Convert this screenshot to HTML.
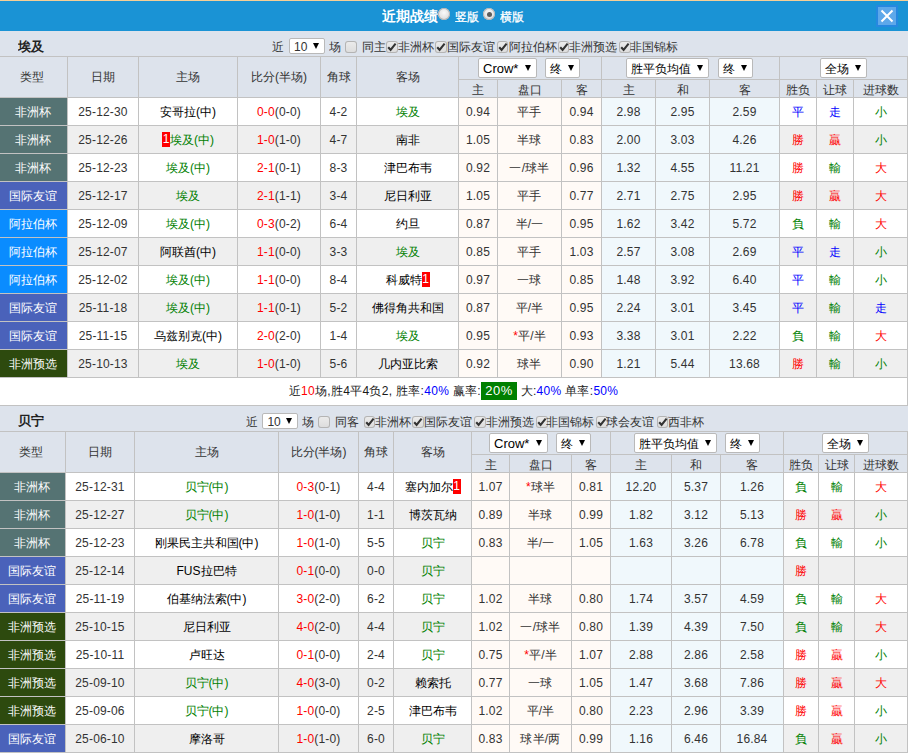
<!DOCTYPE html>
<html><head><meta charset="utf-8"><style>
html,body{margin:0;padding:0;}
body{width:908px;height:753px;overflow:hidden;position:relative;background:#fff;font-family:"Liberation Sans",sans-serif;font-size:12px;color:#333;}
body div{position:absolute;overflow:hidden;}
.n{letter-spacing:0.18px}
.bd{display:inline-block;background:#f00;color:#fff;width:8px;text-align:center;line-height:15px;vertical-align:1px;font-size:12px;}
.tri{position:absolute;width:0;height:0;border-left:3.5px solid transparent;border-right:3.5px solid transparent;border-top:6px solid #000;}
</style></head><body>
<div style="left:0px;top:0px;width:908px;height:1px;background:#f6cf96"></div>
<div style="left:0px;top:1px;width:908px;height:30px;background:#1a93d5"></div>
<div style="left:382px;top:8px;width:60px;height:16px;color:#fff;font-weight:bold;font-size:14px;line-height:16px">近期战绩</div>
<div style="left:438px;top:8px;width:12px;height:12px;border-radius:50%;background:radial-gradient(circle at 50% 40%,#fafafa,#d0d0d0);box-shadow:inset 0 0 0 1px #b4b4b4"></div>
<div style="left:455px;top:10px;width:30px;height:14px;color:#fff;font-size:12px;line-height:14px;-webkit-text-stroke:0.3px #fff">竖版</div>
<div style="left:483px;top:8px;width:12px;height:12px;border-radius:50%;background:radial-gradient(circle at 50% 40%,#fafafa,#d0d0d0);box-shadow:inset 0 0 0 1px #b4b4b4"><div style="left:3.5px;top:3.5px;width:5px;height:5px;border-radius:50%;background:#5c5c5c"></div></div>
<div style="left:500px;top:10px;width:30px;height:14px;color:#fff;font-size:12px;line-height:14px;-webkit-text-stroke:0.3px #fff">横版</div>
<div style="left:876px;top:5px;width:22px;height:22px;background:#5ea8ea;border:2px solid #2688e0;box-sizing:border-box"><svg width="18" height="18" viewBox="0 0 18 18" style="position:absolute;left:0;top:0"><path d="M3.5 3.5 L14.5 14.5 M14.5 3.5 L3.5 14.5" stroke="#fff" stroke-width="2"/></svg></div>
<div style="left:0px;top:56px;width:908px;height:322px;background:#c2c2c2"></div>
<div style="left:0px;top:31px;width:908px;height:25px;background:#dde3ec"></div>
<div style="left:18px;top:39px;width:40px;height:15px;font-weight:bold;font-size:13px;line-height:15px;color:#222">埃及</div>
<div style="left:0px;top:57px;width:67px;height:40px;background:#dde3ec;line-height:40px;text-align:center;font-size:12px;color:#333;padding-right:3px;box-sizing:border-box">类型</div>
<div style="left:68px;top:57px;width:70px;height:40px;background:#dde3ec;line-height:40px;text-align:center;font-size:12px;color:#333">日期</div>
<div style="left:139px;top:57px;width:98px;height:40px;background:#dde3ec;line-height:40px;text-align:center;font-size:12px;color:#333">主场</div>
<div style="left:238px;top:57px;width:82px;height:40px;background:#dde3ec;line-height:40px;text-align:center;font-size:12px;color:#333">比分(半场)</div>
<div style="left:321px;top:57px;width:35px;height:40px;background:#dde3ec;line-height:40px;text-align:center;font-size:12px;color:#333">角球</div>
<div style="left:357px;top:57px;width:101px;height:40px;background:#dde3ec;line-height:40px;text-align:center;font-size:12px;color:#333">客场</div>
<div style="left:459px;top:57px;width:142px;height:22px;background:#dde3ec;line-height:22px;text-align:center;"></div>
<div style="left:602px;top:57px;width:177px;height:22px;background:#dde3ec;line-height:22px;text-align:center;"></div>
<div style="left:780px;top:57px;width:127px;height:22px;background:#dde3ec;line-height:22px;text-align:center;"></div>
<div style="left:459px;top:80px;width:38px;height:17px;background:#dde3ec;line-height:17px;text-align:center;font-size:12px;color:#333"><span style="position:relative;top:2px">主</span></div>
<div style="left:498px;top:80px;width:63px;height:17px;background:#dde3ec;line-height:17px;text-align:center;font-size:12px;color:#333"><span style="position:relative;top:2px">盘口</span></div>
<div style="left:562px;top:80px;width:39px;height:17px;background:#dde3ec;line-height:17px;text-align:center;font-size:12px;color:#333"><span style="position:relative;top:2px">客</span></div>
<div style="left:602px;top:80px;width:53px;height:17px;background:#dde3ec;line-height:17px;text-align:center;font-size:12px;color:#333"><span style="position:relative;top:2px">主</span></div>
<div style="left:656px;top:80px;width:53px;height:17px;background:#dde3ec;line-height:17px;text-align:center;font-size:12px;color:#333"><span style="position:relative;top:2px">和</span></div>
<div style="left:710px;top:80px;width:69px;height:17px;background:#dde3ec;line-height:17px;text-align:center;font-size:12px;color:#333"><span style="position:relative;top:2px">客</span></div>
<div style="left:780px;top:80px;width:36px;height:17px;background:#dde3ec;line-height:17px;text-align:center;font-size:12px;color:#333"><span style="position:relative;top:2px">胜负</span></div>
<div style="left:817px;top:80px;width:36px;height:17px;background:#dde3ec;line-height:17px;text-align:center;font-size:12px;color:#333"><span style="position:relative;top:2px">让球</span></div>
<div style="left:854px;top:80px;width:53px;height:17px;background:#dde3ec;line-height:17px;text-align:center;font-size:12px;color:#333"><span style="position:relative;top:2px">进球数</span></div>
<div style="left:0px;top:98px;width:67px;height:27px;background:#557373;line-height:29px;text-align:center;color:#fff;font-size:12px;padding-right:2px;box-sizing:border-box">非洲杯</div>
<div style="left:68px;top:98px;width:70px;height:27px;background:#ffffff;line-height:29px;text-align:center;color:#333333;letter-spacing:0.18px">25-12-30</div>
<div style="left:139px;top:98px;width:98px;height:27px;background:#ffffff;line-height:29px;text-align:center;"><span style="color:#000">安哥拉(中)</span></div>
<div style="left:238px;top:98px;width:82px;height:27px;background:#ffffff;line-height:29px;text-align:center;letter-spacing:0.18px"><span style="color:#ff0000">0-0</span><span style="color:#333333">(0-0)</span></div>
<div style="left:321px;top:98px;width:35px;height:27px;background:#ffffff;line-height:29px;text-align:center;color:#333333;letter-spacing:0.18px">4-2</div>
<div style="left:357px;top:98px;width:101px;height:27px;background:#ffffff;line-height:29px;text-align:center;"><span style="color:#008000">埃及</span></div>
<div style="left:459px;top:98px;width:38px;height:27px;background:#fffaf6;line-height:29px;text-align:center;color:#333333;letter-spacing:0.18px">0.94</div>
<div style="left:498px;top:98px;width:63px;height:27px;background:#fffaf6;line-height:29px;text-align:center;color:#333333;letter-spacing:0.18px">平手</div>
<div style="left:562px;top:98px;width:39px;height:27px;background:#fffaf6;line-height:29px;text-align:center;color:#333333;letter-spacing:0.18px">0.94</div>
<div style="left:602px;top:98px;width:53px;height:27px;background:#f0f8fc;line-height:29px;text-align:center;color:#333333;letter-spacing:0.18px">2.98</div>
<div style="left:656px;top:98px;width:53px;height:27px;background:#f0f8fc;line-height:29px;text-align:center;color:#333333;letter-spacing:0.18px">2.95</div>
<div style="left:710px;top:98px;width:69px;height:27px;background:#f0f8fc;line-height:29px;text-align:center;color:#333333;letter-spacing:0.18px">2.59</div>
<div style="left:780px;top:98px;width:36px;height:27px;background:#ffffff;line-height:29px;text-align:center;color:#0000ff">平</div>
<div style="left:817px;top:98px;width:36px;height:27px;background:#ffffff;line-height:29px;text-align:center;color:#0000ff">走</div>
<div style="left:854px;top:98px;width:53px;height:27px;background:#ffffff;line-height:29px;text-align:center;color:#008000">小</div>
<div style="left:0px;top:126px;width:67px;height:27px;background:#557373;line-height:29px;text-align:center;color:#fff;font-size:12px;padding-right:2px;box-sizing:border-box">非洲杯</div>
<div style="left:68px;top:126px;width:70px;height:27px;background:#efefef;line-height:29px;text-align:center;color:#333333;letter-spacing:0.18px">25-12-26</div>
<div style="left:139px;top:126px;width:98px;height:27px;background:#efefef;line-height:29px;text-align:center;"><span class="bd">1</span><span style="color:#008000">埃及(中)</span></div>
<div style="left:238px;top:126px;width:82px;height:27px;background:#efefef;line-height:29px;text-align:center;letter-spacing:0.18px"><span style="color:#ff0000">1-0</span><span style="color:#333333">(1-0)</span></div>
<div style="left:321px;top:126px;width:35px;height:27px;background:#efefef;line-height:29px;text-align:center;color:#333333;letter-spacing:0.18px">4-7</div>
<div style="left:357px;top:126px;width:101px;height:27px;background:#efefef;line-height:29px;text-align:center;"><span style="color:#000">南非</span></div>
<div style="left:459px;top:126px;width:38px;height:27px;background:#fffaf6;line-height:29px;text-align:center;color:#333333;letter-spacing:0.18px">1.05</div>
<div style="left:498px;top:126px;width:63px;height:27px;background:#fffaf6;line-height:29px;text-align:center;color:#333333;letter-spacing:0.18px">半球</div>
<div style="left:562px;top:126px;width:39px;height:27px;background:#fffaf6;line-height:29px;text-align:center;color:#333333;letter-spacing:0.18px">0.83</div>
<div style="left:602px;top:126px;width:53px;height:27px;background:#f0f8fc;line-height:29px;text-align:center;color:#333333;letter-spacing:0.18px">2.00</div>
<div style="left:656px;top:126px;width:53px;height:27px;background:#f0f8fc;line-height:29px;text-align:center;color:#333333;letter-spacing:0.18px">3.03</div>
<div style="left:710px;top:126px;width:69px;height:27px;background:#f0f8fc;line-height:29px;text-align:center;color:#333333;letter-spacing:0.18px">4.26</div>
<div style="left:780px;top:126px;width:36px;height:27px;background:#efefef;line-height:29px;text-align:center;color:#ff0000">勝</div>
<div style="left:817px;top:126px;width:36px;height:27px;background:#efefef;line-height:29px;text-align:center;color:#ff0000">贏</div>
<div style="left:854px;top:126px;width:53px;height:27px;background:#efefef;line-height:29px;text-align:center;color:#008000">小</div>
<div style="left:0px;top:154px;width:67px;height:27px;background:#557373;line-height:29px;text-align:center;color:#fff;font-size:12px;padding-right:2px;box-sizing:border-box">非洲杯</div>
<div style="left:68px;top:154px;width:70px;height:27px;background:#ffffff;line-height:29px;text-align:center;color:#333333;letter-spacing:0.18px">25-12-23</div>
<div style="left:139px;top:154px;width:98px;height:27px;background:#ffffff;line-height:29px;text-align:center;"><span style="color:#008000">埃及(中)</span></div>
<div style="left:238px;top:154px;width:82px;height:27px;background:#ffffff;line-height:29px;text-align:center;letter-spacing:0.18px"><span style="color:#ff0000">2-1</span><span style="color:#333333">(0-1)</span></div>
<div style="left:321px;top:154px;width:35px;height:27px;background:#ffffff;line-height:29px;text-align:center;color:#333333;letter-spacing:0.18px">8-3</div>
<div style="left:357px;top:154px;width:101px;height:27px;background:#ffffff;line-height:29px;text-align:center;"><span style="color:#000">津巴布韦</span></div>
<div style="left:459px;top:154px;width:38px;height:27px;background:#fffaf6;line-height:29px;text-align:center;color:#333333;letter-spacing:0.18px">0.92</div>
<div style="left:498px;top:154px;width:63px;height:27px;background:#fffaf6;line-height:29px;text-align:center;color:#333333;letter-spacing:0.18px">一/球半</div>
<div style="left:562px;top:154px;width:39px;height:27px;background:#fffaf6;line-height:29px;text-align:center;color:#333333;letter-spacing:0.18px">0.96</div>
<div style="left:602px;top:154px;width:53px;height:27px;background:#f0f8fc;line-height:29px;text-align:center;color:#333333;letter-spacing:0.18px">1.32</div>
<div style="left:656px;top:154px;width:53px;height:27px;background:#f0f8fc;line-height:29px;text-align:center;color:#333333;letter-spacing:0.18px">4.55</div>
<div style="left:710px;top:154px;width:69px;height:27px;background:#f0f8fc;line-height:29px;text-align:center;color:#333333;letter-spacing:0.18px">11.21</div>
<div style="left:780px;top:154px;width:36px;height:27px;background:#ffffff;line-height:29px;text-align:center;color:#ff0000">勝</div>
<div style="left:817px;top:154px;width:36px;height:27px;background:#ffffff;line-height:29px;text-align:center;color:#008000">輸</div>
<div style="left:854px;top:154px;width:53px;height:27px;background:#ffffff;line-height:29px;text-align:center;color:#ff0000">大</div>
<div style="left:0px;top:182px;width:67px;height:27px;background:#4a62ba;line-height:29px;text-align:center;color:#fff;font-size:12px;padding-right:2px;box-sizing:border-box">国际友谊</div>
<div style="left:68px;top:182px;width:70px;height:27px;background:#efefef;line-height:29px;text-align:center;color:#333333;letter-spacing:0.18px">25-12-17</div>
<div style="left:139px;top:182px;width:98px;height:27px;background:#efefef;line-height:29px;text-align:center;"><span style="color:#008000">埃及</span></div>
<div style="left:238px;top:182px;width:82px;height:27px;background:#efefef;line-height:29px;text-align:center;letter-spacing:0.18px"><span style="color:#ff0000">2-1</span><span style="color:#333333">(1-1)</span></div>
<div style="left:321px;top:182px;width:35px;height:27px;background:#efefef;line-height:29px;text-align:center;color:#333333;letter-spacing:0.18px">3-4</div>
<div style="left:357px;top:182px;width:101px;height:27px;background:#efefef;line-height:29px;text-align:center;"><span style="color:#000">尼日利亚</span></div>
<div style="left:459px;top:182px;width:38px;height:27px;background:#fffaf6;line-height:29px;text-align:center;color:#333333;letter-spacing:0.18px">1.05</div>
<div style="left:498px;top:182px;width:63px;height:27px;background:#fffaf6;line-height:29px;text-align:center;color:#333333;letter-spacing:0.18px">平手</div>
<div style="left:562px;top:182px;width:39px;height:27px;background:#fffaf6;line-height:29px;text-align:center;color:#333333;letter-spacing:0.18px">0.77</div>
<div style="left:602px;top:182px;width:53px;height:27px;background:#f0f8fc;line-height:29px;text-align:center;color:#333333;letter-spacing:0.18px">2.71</div>
<div style="left:656px;top:182px;width:53px;height:27px;background:#f0f8fc;line-height:29px;text-align:center;color:#333333;letter-spacing:0.18px">2.75</div>
<div style="left:710px;top:182px;width:69px;height:27px;background:#f0f8fc;line-height:29px;text-align:center;color:#333333;letter-spacing:0.18px">2.95</div>
<div style="left:780px;top:182px;width:36px;height:27px;background:#efefef;line-height:29px;text-align:center;color:#ff0000">勝</div>
<div style="left:817px;top:182px;width:36px;height:27px;background:#efefef;line-height:29px;text-align:center;color:#ff0000">贏</div>
<div style="left:854px;top:182px;width:53px;height:27px;background:#efefef;line-height:29px;text-align:center;color:#ff0000">大</div>
<div style="left:0px;top:210px;width:67px;height:27px;background:#0a8cff;line-height:29px;text-align:center;color:#fff;font-size:12px;padding-right:2px;box-sizing:border-box">阿拉伯杯</div>
<div style="left:68px;top:210px;width:70px;height:27px;background:#ffffff;line-height:29px;text-align:center;color:#333333;letter-spacing:0.18px">25-12-09</div>
<div style="left:139px;top:210px;width:98px;height:27px;background:#ffffff;line-height:29px;text-align:center;"><span style="color:#008000">埃及(中)</span></div>
<div style="left:238px;top:210px;width:82px;height:27px;background:#ffffff;line-height:29px;text-align:center;letter-spacing:0.18px"><span style="color:#ff0000">0-3</span><span style="color:#333333">(0-2)</span></div>
<div style="left:321px;top:210px;width:35px;height:27px;background:#ffffff;line-height:29px;text-align:center;color:#333333;letter-spacing:0.18px">6-4</div>
<div style="left:357px;top:210px;width:101px;height:27px;background:#ffffff;line-height:29px;text-align:center;"><span style="color:#000">约旦</span></div>
<div style="left:459px;top:210px;width:38px;height:27px;background:#fffaf6;line-height:29px;text-align:center;color:#333333;letter-spacing:0.18px">0.87</div>
<div style="left:498px;top:210px;width:63px;height:27px;background:#fffaf6;line-height:29px;text-align:center;color:#333333;letter-spacing:0.18px">半/一</div>
<div style="left:562px;top:210px;width:39px;height:27px;background:#fffaf6;line-height:29px;text-align:center;color:#333333;letter-spacing:0.18px">0.95</div>
<div style="left:602px;top:210px;width:53px;height:27px;background:#f0f8fc;line-height:29px;text-align:center;color:#333333;letter-spacing:0.18px">1.62</div>
<div style="left:656px;top:210px;width:53px;height:27px;background:#f0f8fc;line-height:29px;text-align:center;color:#333333;letter-spacing:0.18px">3.42</div>
<div style="left:710px;top:210px;width:69px;height:27px;background:#f0f8fc;line-height:29px;text-align:center;color:#333333;letter-spacing:0.18px">5.72</div>
<div style="left:780px;top:210px;width:36px;height:27px;background:#ffffff;line-height:29px;text-align:center;color:#008000">負</div>
<div style="left:817px;top:210px;width:36px;height:27px;background:#ffffff;line-height:29px;text-align:center;color:#008000">輸</div>
<div style="left:854px;top:210px;width:53px;height:27px;background:#ffffff;line-height:29px;text-align:center;color:#ff0000">大</div>
<div style="left:0px;top:238px;width:67px;height:27px;background:#0a8cff;line-height:29px;text-align:center;color:#fff;font-size:12px;padding-right:2px;box-sizing:border-box">阿拉伯杯</div>
<div style="left:68px;top:238px;width:70px;height:27px;background:#efefef;line-height:29px;text-align:center;color:#333333;letter-spacing:0.18px">25-12-07</div>
<div style="left:139px;top:238px;width:98px;height:27px;background:#efefef;line-height:29px;text-align:center;"><span style="color:#000">阿联酋(中)</span></div>
<div style="left:238px;top:238px;width:82px;height:27px;background:#efefef;line-height:29px;text-align:center;letter-spacing:0.18px"><span style="color:#ff0000">1-1</span><span style="color:#333333">(0-0)</span></div>
<div style="left:321px;top:238px;width:35px;height:27px;background:#efefef;line-height:29px;text-align:center;color:#333333;letter-spacing:0.18px">3-3</div>
<div style="left:357px;top:238px;width:101px;height:27px;background:#efefef;line-height:29px;text-align:center;"><span style="color:#008000">埃及</span></div>
<div style="left:459px;top:238px;width:38px;height:27px;background:#fffaf6;line-height:29px;text-align:center;color:#333333;letter-spacing:0.18px">0.85</div>
<div style="left:498px;top:238px;width:63px;height:27px;background:#fffaf6;line-height:29px;text-align:center;color:#333333;letter-spacing:0.18px">平手</div>
<div style="left:562px;top:238px;width:39px;height:27px;background:#fffaf6;line-height:29px;text-align:center;color:#333333;letter-spacing:0.18px">1.03</div>
<div style="left:602px;top:238px;width:53px;height:27px;background:#f0f8fc;line-height:29px;text-align:center;color:#333333;letter-spacing:0.18px">2.57</div>
<div style="left:656px;top:238px;width:53px;height:27px;background:#f0f8fc;line-height:29px;text-align:center;color:#333333;letter-spacing:0.18px">3.08</div>
<div style="left:710px;top:238px;width:69px;height:27px;background:#f0f8fc;line-height:29px;text-align:center;color:#333333;letter-spacing:0.18px">2.69</div>
<div style="left:780px;top:238px;width:36px;height:27px;background:#efefef;line-height:29px;text-align:center;color:#0000ff">平</div>
<div style="left:817px;top:238px;width:36px;height:27px;background:#efefef;line-height:29px;text-align:center;color:#0000ff">走</div>
<div style="left:854px;top:238px;width:53px;height:27px;background:#efefef;line-height:29px;text-align:center;color:#008000">小</div>
<div style="left:0px;top:266px;width:67px;height:27px;background:#0a8cff;line-height:29px;text-align:center;color:#fff;font-size:12px;padding-right:2px;box-sizing:border-box">阿拉伯杯</div>
<div style="left:68px;top:266px;width:70px;height:27px;background:#ffffff;line-height:29px;text-align:center;color:#333333;letter-spacing:0.18px">25-12-02</div>
<div style="left:139px;top:266px;width:98px;height:27px;background:#ffffff;line-height:29px;text-align:center;"><span style="color:#008000">埃及(中)</span></div>
<div style="left:238px;top:266px;width:82px;height:27px;background:#ffffff;line-height:29px;text-align:center;letter-spacing:0.18px"><span style="color:#ff0000">1-1</span><span style="color:#333333">(0-0)</span></div>
<div style="left:321px;top:266px;width:35px;height:27px;background:#ffffff;line-height:29px;text-align:center;color:#333333;letter-spacing:0.18px">8-4</div>
<div style="left:357px;top:266px;width:101px;height:27px;background:#ffffff;line-height:29px;text-align:center;"><span style="color:#000">科威特</span><span class="bd">1</span></div>
<div style="left:459px;top:266px;width:38px;height:27px;background:#fffaf6;line-height:29px;text-align:center;color:#333333;letter-spacing:0.18px">0.97</div>
<div style="left:498px;top:266px;width:63px;height:27px;background:#fffaf6;line-height:29px;text-align:center;color:#333333;letter-spacing:0.18px">一球</div>
<div style="left:562px;top:266px;width:39px;height:27px;background:#fffaf6;line-height:29px;text-align:center;color:#333333;letter-spacing:0.18px">0.85</div>
<div style="left:602px;top:266px;width:53px;height:27px;background:#f0f8fc;line-height:29px;text-align:center;color:#333333;letter-spacing:0.18px">1.48</div>
<div style="left:656px;top:266px;width:53px;height:27px;background:#f0f8fc;line-height:29px;text-align:center;color:#333333;letter-spacing:0.18px">3.92</div>
<div style="left:710px;top:266px;width:69px;height:27px;background:#f0f8fc;line-height:29px;text-align:center;color:#333333;letter-spacing:0.18px">6.40</div>
<div style="left:780px;top:266px;width:36px;height:27px;background:#ffffff;line-height:29px;text-align:center;color:#0000ff">平</div>
<div style="left:817px;top:266px;width:36px;height:27px;background:#ffffff;line-height:29px;text-align:center;color:#008000">輸</div>
<div style="left:854px;top:266px;width:53px;height:27px;background:#ffffff;line-height:29px;text-align:center;color:#008000">小</div>
<div style="left:0px;top:294px;width:67px;height:27px;background:#4a62ba;line-height:29px;text-align:center;color:#fff;font-size:12px;padding-right:2px;box-sizing:border-box">国际友谊</div>
<div style="left:68px;top:294px;width:70px;height:27px;background:#efefef;line-height:29px;text-align:center;color:#333333;letter-spacing:0.18px">25-11-18</div>
<div style="left:139px;top:294px;width:98px;height:27px;background:#efefef;line-height:29px;text-align:center;"><span style="color:#008000">埃及(中)</span></div>
<div style="left:238px;top:294px;width:82px;height:27px;background:#efefef;line-height:29px;text-align:center;letter-spacing:0.18px"><span style="color:#ff0000">1-1</span><span style="color:#333333">(0-1)</span></div>
<div style="left:321px;top:294px;width:35px;height:27px;background:#efefef;line-height:29px;text-align:center;color:#333333;letter-spacing:0.18px">5-2</div>
<div style="left:357px;top:294px;width:101px;height:27px;background:#efefef;line-height:29px;text-align:center;"><span style="color:#000">佛得角共和国</span></div>
<div style="left:459px;top:294px;width:38px;height:27px;background:#fffaf6;line-height:29px;text-align:center;color:#333333;letter-spacing:0.18px">0.87</div>
<div style="left:498px;top:294px;width:63px;height:27px;background:#fffaf6;line-height:29px;text-align:center;color:#333333;letter-spacing:0.18px">平/半</div>
<div style="left:562px;top:294px;width:39px;height:27px;background:#fffaf6;line-height:29px;text-align:center;color:#333333;letter-spacing:0.18px">0.95</div>
<div style="left:602px;top:294px;width:53px;height:27px;background:#f0f8fc;line-height:29px;text-align:center;color:#333333;letter-spacing:0.18px">2.24</div>
<div style="left:656px;top:294px;width:53px;height:27px;background:#f0f8fc;line-height:29px;text-align:center;color:#333333;letter-spacing:0.18px">3.01</div>
<div style="left:710px;top:294px;width:69px;height:27px;background:#f0f8fc;line-height:29px;text-align:center;color:#333333;letter-spacing:0.18px">3.45</div>
<div style="left:780px;top:294px;width:36px;height:27px;background:#efefef;line-height:29px;text-align:center;color:#0000ff">平</div>
<div style="left:817px;top:294px;width:36px;height:27px;background:#efefef;line-height:29px;text-align:center;color:#008000">輸</div>
<div style="left:854px;top:294px;width:53px;height:27px;background:#efefef;line-height:29px;text-align:center;color:#0000ff">走</div>
<div style="left:0px;top:322px;width:67px;height:27px;background:#4a62ba;line-height:29px;text-align:center;color:#fff;font-size:12px;padding-right:2px;box-sizing:border-box">国际友谊</div>
<div style="left:68px;top:322px;width:70px;height:27px;background:#ffffff;line-height:29px;text-align:center;color:#333333;letter-spacing:0.18px">25-11-15</div>
<div style="left:139px;top:322px;width:98px;height:27px;background:#ffffff;line-height:29px;text-align:center;"><span style="color:#000">乌兹别克(中)</span></div>
<div style="left:238px;top:322px;width:82px;height:27px;background:#ffffff;line-height:29px;text-align:center;letter-spacing:0.18px"><span style="color:#ff0000">2-0</span><span style="color:#333333">(2-0)</span></div>
<div style="left:321px;top:322px;width:35px;height:27px;background:#ffffff;line-height:29px;text-align:center;color:#333333;letter-spacing:0.18px">1-4</div>
<div style="left:357px;top:322px;width:101px;height:27px;background:#ffffff;line-height:29px;text-align:center;"><span style="color:#008000">埃及</span></div>
<div style="left:459px;top:322px;width:38px;height:27px;background:#fffaf6;line-height:29px;text-align:center;color:#333333;letter-spacing:0.18px">0.95</div>
<div style="left:498px;top:322px;width:63px;height:27px;background:#fffaf6;line-height:29px;text-align:center;color:#333333;letter-spacing:0.18px"><span style="color:#f00">*</span>平/半</div>
<div style="left:562px;top:322px;width:39px;height:27px;background:#fffaf6;line-height:29px;text-align:center;color:#333333;letter-spacing:0.18px">0.93</div>
<div style="left:602px;top:322px;width:53px;height:27px;background:#f0f8fc;line-height:29px;text-align:center;color:#333333;letter-spacing:0.18px">3.38</div>
<div style="left:656px;top:322px;width:53px;height:27px;background:#f0f8fc;line-height:29px;text-align:center;color:#333333;letter-spacing:0.18px">3.01</div>
<div style="left:710px;top:322px;width:69px;height:27px;background:#f0f8fc;line-height:29px;text-align:center;color:#333333;letter-spacing:0.18px">2.22</div>
<div style="left:780px;top:322px;width:36px;height:27px;background:#ffffff;line-height:29px;text-align:center;color:#008000">負</div>
<div style="left:817px;top:322px;width:36px;height:27px;background:#ffffff;line-height:29px;text-align:center;color:#008000">輸</div>
<div style="left:854px;top:322px;width:53px;height:27px;background:#ffffff;line-height:29px;text-align:center;color:#ff0000">大</div>
<div style="left:0px;top:350px;width:67px;height:27px;background:#2d4a0e;line-height:29px;text-align:center;color:#fff;font-size:12px;padding-right:2px;box-sizing:border-box">非洲预选</div>
<div style="left:68px;top:350px;width:70px;height:27px;background:#efefef;line-height:29px;text-align:center;color:#333333;letter-spacing:0.18px">25-10-13</div>
<div style="left:139px;top:350px;width:98px;height:27px;background:#efefef;line-height:29px;text-align:center;"><span style="color:#008000">埃及</span></div>
<div style="left:238px;top:350px;width:82px;height:27px;background:#efefef;line-height:29px;text-align:center;letter-spacing:0.18px"><span style="color:#ff0000">1-0</span><span style="color:#333333">(1-0)</span></div>
<div style="left:321px;top:350px;width:35px;height:27px;background:#efefef;line-height:29px;text-align:center;color:#333333;letter-spacing:0.18px">5-6</div>
<div style="left:357px;top:350px;width:101px;height:27px;background:#efefef;line-height:29px;text-align:center;"><span style="color:#000">几内亚比索</span></div>
<div style="left:459px;top:350px;width:38px;height:27px;background:#fffaf6;line-height:29px;text-align:center;color:#333333;letter-spacing:0.18px">0.92</div>
<div style="left:498px;top:350px;width:63px;height:27px;background:#fffaf6;line-height:29px;text-align:center;color:#333333;letter-spacing:0.18px">球半</div>
<div style="left:562px;top:350px;width:39px;height:27px;background:#fffaf6;line-height:29px;text-align:center;color:#333333;letter-spacing:0.18px">0.90</div>
<div style="left:602px;top:350px;width:53px;height:27px;background:#f0f8fc;line-height:29px;text-align:center;color:#333333;letter-spacing:0.18px">1.21</div>
<div style="left:656px;top:350px;width:53px;height:27px;background:#f0f8fc;line-height:29px;text-align:center;color:#333333;letter-spacing:0.18px">5.44</div>
<div style="left:710px;top:350px;width:69px;height:27px;background:#f0f8fc;line-height:29px;text-align:center;color:#333333;letter-spacing:0.18px">13.68</div>
<div style="left:780px;top:350px;width:36px;height:27px;background:#efefef;line-height:29px;text-align:center;color:#ff0000">勝</div>
<div style="left:817px;top:350px;width:36px;height:27px;background:#efefef;line-height:29px;text-align:center;color:#008000">輸</div>
<div style="left:854px;top:350px;width:53px;height:27px;background:#efefef;line-height:29px;text-align:center;color:#008000">小</div>
<div style="left:0px;top:431px;width:908px;height:322px;background:#c2c2c2"></div>
<div style="left:0px;top:406px;width:908px;height:25px;background:#dde3ec"></div>
<div style="left:18px;top:413px;width:40px;height:15px;font-weight:bold;font-size:13px;line-height:15px;color:#222">贝宁</div>
<div style="left:0px;top:432px;width:65px;height:40px;background:#dde3ec;line-height:40px;text-align:center;font-size:12px;color:#333;padding-right:3px;box-sizing:border-box">类型</div>
<div style="left:66px;top:432px;width:68px;height:40px;background:#dde3ec;line-height:40px;text-align:center;font-size:12px;color:#333">日期</div>
<div style="left:135px;top:432px;width:143px;height:40px;background:#dde3ec;line-height:40px;text-align:center;font-size:12px;color:#333">主场</div>
<div style="left:279px;top:432px;width:79px;height:40px;background:#dde3ec;line-height:40px;text-align:center;font-size:12px;color:#333">比分(半场)</div>
<div style="left:359px;top:432px;width:34px;height:40px;background:#dde3ec;line-height:40px;text-align:center;font-size:12px;color:#333">角球</div>
<div style="left:394px;top:432px;width:77px;height:40px;background:#dde3ec;line-height:40px;text-align:center;font-size:12px;color:#333">客场</div>
<div style="left:472px;top:432px;width:138px;height:22px;background:#dde3ec;line-height:22px;text-align:center;"></div>
<div style="left:611px;top:432px;width:172px;height:22px;background:#dde3ec;line-height:22px;text-align:center;"></div>
<div style="left:784px;top:432px;width:123px;height:22px;background:#dde3ec;line-height:22px;text-align:center;"></div>
<div style="left:472px;top:455px;width:37px;height:17px;background:#dde3ec;line-height:17px;text-align:center;font-size:12px;color:#333"><span style="position:relative;top:2px">主</span></div>
<div style="left:510px;top:455px;width:61px;height:17px;background:#dde3ec;line-height:17px;text-align:center;font-size:12px;color:#333"><span style="position:relative;top:2px">盘口</span></div>
<div style="left:572px;top:455px;width:38px;height:17px;background:#dde3ec;line-height:17px;text-align:center;font-size:12px;color:#333"><span style="position:relative;top:2px">客</span></div>
<div style="left:611px;top:455px;width:60px;height:17px;background:#dde3ec;line-height:17px;text-align:center;font-size:12px;color:#333"><span style="position:relative;top:2px">主</span></div>
<div style="left:672px;top:455px;width:48px;height:17px;background:#dde3ec;line-height:17px;text-align:center;font-size:12px;color:#333"><span style="position:relative;top:2px">和</span></div>
<div style="left:721px;top:455px;width:62px;height:17px;background:#dde3ec;line-height:17px;text-align:center;font-size:12px;color:#333"><span style="position:relative;top:2px">客</span></div>
<div style="left:784px;top:455px;width:34px;height:17px;background:#dde3ec;line-height:17px;text-align:center;font-size:12px;color:#333"><span style="position:relative;top:2px">胜负</span></div>
<div style="left:819px;top:455px;width:35px;height:17px;background:#dde3ec;line-height:17px;text-align:center;font-size:12px;color:#333"><span style="position:relative;top:2px">让球</span></div>
<div style="left:855px;top:455px;width:52px;height:17px;background:#dde3ec;line-height:17px;text-align:center;font-size:12px;color:#333"><span style="position:relative;top:2px">进球数</span></div>
<div style="left:0px;top:473px;width:65px;height:27px;background:#557373;line-height:29px;text-align:center;color:#fff;font-size:12px;padding-right:2px;box-sizing:border-box">非洲杯</div>
<div style="left:66px;top:473px;width:68px;height:27px;background:#ffffff;line-height:29px;text-align:center;color:#333333;letter-spacing:0.18px">25-12-31</div>
<div style="left:135px;top:473px;width:143px;height:27px;background:#ffffff;line-height:29px;text-align:center;"><span style="color:#008000">贝宁(中)</span></div>
<div style="left:279px;top:473px;width:79px;height:27px;background:#ffffff;line-height:29px;text-align:center;letter-spacing:0.18px"><span style="color:#ff0000">0-3</span><span style="color:#333333">(0-1)</span></div>
<div style="left:359px;top:473px;width:34px;height:27px;background:#ffffff;line-height:29px;text-align:center;color:#333333;letter-spacing:0.18px">4-4</div>
<div style="left:394px;top:473px;width:77px;height:27px;background:#ffffff;line-height:29px;text-align:center;"><span style="color:#000">塞内加尔</span><span class="bd">1</span></div>
<div style="left:472px;top:473px;width:37px;height:27px;background:#fffaf6;line-height:29px;text-align:center;color:#333333;letter-spacing:0.18px">1.07</div>
<div style="left:510px;top:473px;width:61px;height:27px;background:#fffaf6;line-height:29px;text-align:center;color:#333333;letter-spacing:0.18px"><span style="color:#f00">*</span>球半</div>
<div style="left:572px;top:473px;width:38px;height:27px;background:#fffaf6;line-height:29px;text-align:center;color:#333333;letter-spacing:0.18px">0.81</div>
<div style="left:611px;top:473px;width:60px;height:27px;background:#f0f8fc;line-height:29px;text-align:center;color:#333333;letter-spacing:0.18px">12.20</div>
<div style="left:672px;top:473px;width:48px;height:27px;background:#f0f8fc;line-height:29px;text-align:center;color:#333333;letter-spacing:0.18px">5.37</div>
<div style="left:721px;top:473px;width:62px;height:27px;background:#f0f8fc;line-height:29px;text-align:center;color:#333333;letter-spacing:0.18px">1.26</div>
<div style="left:784px;top:473px;width:34px;height:27px;background:#ffffff;line-height:29px;text-align:center;color:#008000">負</div>
<div style="left:819px;top:473px;width:35px;height:27px;background:#ffffff;line-height:29px;text-align:center;color:#008000">輸</div>
<div style="left:855px;top:473px;width:52px;height:27px;background:#ffffff;line-height:29px;text-align:center;color:#ff0000">大</div>
<div style="left:0px;top:501px;width:65px;height:27px;background:#557373;line-height:29px;text-align:center;color:#fff;font-size:12px;padding-right:2px;box-sizing:border-box">非洲杯</div>
<div style="left:66px;top:501px;width:68px;height:27px;background:#efefef;line-height:29px;text-align:center;color:#333333;letter-spacing:0.18px">25-12-27</div>
<div style="left:135px;top:501px;width:143px;height:27px;background:#efefef;line-height:29px;text-align:center;"><span style="color:#008000">贝宁(中)</span></div>
<div style="left:279px;top:501px;width:79px;height:27px;background:#efefef;line-height:29px;text-align:center;letter-spacing:0.18px"><span style="color:#ff0000">1-0</span><span style="color:#333333">(1-0)</span></div>
<div style="left:359px;top:501px;width:34px;height:27px;background:#efefef;line-height:29px;text-align:center;color:#333333;letter-spacing:0.18px">1-1</div>
<div style="left:394px;top:501px;width:77px;height:27px;background:#efefef;line-height:29px;text-align:center;"><span style="color:#000">博茨瓦纳</span></div>
<div style="left:472px;top:501px;width:37px;height:27px;background:#fffaf6;line-height:29px;text-align:center;color:#333333;letter-spacing:0.18px">0.89</div>
<div style="left:510px;top:501px;width:61px;height:27px;background:#fffaf6;line-height:29px;text-align:center;color:#333333;letter-spacing:0.18px">半球</div>
<div style="left:572px;top:501px;width:38px;height:27px;background:#fffaf6;line-height:29px;text-align:center;color:#333333;letter-spacing:0.18px">0.99</div>
<div style="left:611px;top:501px;width:60px;height:27px;background:#f0f8fc;line-height:29px;text-align:center;color:#333333;letter-spacing:0.18px">1.82</div>
<div style="left:672px;top:501px;width:48px;height:27px;background:#f0f8fc;line-height:29px;text-align:center;color:#333333;letter-spacing:0.18px">3.12</div>
<div style="left:721px;top:501px;width:62px;height:27px;background:#f0f8fc;line-height:29px;text-align:center;color:#333333;letter-spacing:0.18px">5.13</div>
<div style="left:784px;top:501px;width:34px;height:27px;background:#efefef;line-height:29px;text-align:center;color:#ff0000">勝</div>
<div style="left:819px;top:501px;width:35px;height:27px;background:#efefef;line-height:29px;text-align:center;color:#ff0000">贏</div>
<div style="left:855px;top:501px;width:52px;height:27px;background:#efefef;line-height:29px;text-align:center;color:#008000">小</div>
<div style="left:0px;top:529px;width:65px;height:27px;background:#557373;line-height:29px;text-align:center;color:#fff;font-size:12px;padding-right:2px;box-sizing:border-box">非洲杯</div>
<div style="left:66px;top:529px;width:68px;height:27px;background:#ffffff;line-height:29px;text-align:center;color:#333333;letter-spacing:0.18px">25-12-23</div>
<div style="left:135px;top:529px;width:143px;height:27px;background:#ffffff;line-height:29px;text-align:center;"><span style="color:#000">刚果民主共和国(中)</span></div>
<div style="left:279px;top:529px;width:79px;height:27px;background:#ffffff;line-height:29px;text-align:center;letter-spacing:0.18px"><span style="color:#ff0000">1-0</span><span style="color:#333333">(1-0)</span></div>
<div style="left:359px;top:529px;width:34px;height:27px;background:#ffffff;line-height:29px;text-align:center;color:#333333;letter-spacing:0.18px">5-5</div>
<div style="left:394px;top:529px;width:77px;height:27px;background:#ffffff;line-height:29px;text-align:center;"><span style="color:#008000">贝宁</span></div>
<div style="left:472px;top:529px;width:37px;height:27px;background:#fffaf6;line-height:29px;text-align:center;color:#333333;letter-spacing:0.18px">0.83</div>
<div style="left:510px;top:529px;width:61px;height:27px;background:#fffaf6;line-height:29px;text-align:center;color:#333333;letter-spacing:0.18px">半/一</div>
<div style="left:572px;top:529px;width:38px;height:27px;background:#fffaf6;line-height:29px;text-align:center;color:#333333;letter-spacing:0.18px">1.05</div>
<div style="left:611px;top:529px;width:60px;height:27px;background:#f0f8fc;line-height:29px;text-align:center;color:#333333;letter-spacing:0.18px">1.63</div>
<div style="left:672px;top:529px;width:48px;height:27px;background:#f0f8fc;line-height:29px;text-align:center;color:#333333;letter-spacing:0.18px">3.26</div>
<div style="left:721px;top:529px;width:62px;height:27px;background:#f0f8fc;line-height:29px;text-align:center;color:#333333;letter-spacing:0.18px">6.78</div>
<div style="left:784px;top:529px;width:34px;height:27px;background:#ffffff;line-height:29px;text-align:center;color:#008000">負</div>
<div style="left:819px;top:529px;width:35px;height:27px;background:#ffffff;line-height:29px;text-align:center;color:#008000">輸</div>
<div style="left:855px;top:529px;width:52px;height:27px;background:#ffffff;line-height:29px;text-align:center;color:#008000">小</div>
<div style="left:0px;top:557px;width:65px;height:27px;background:#4a62ba;line-height:29px;text-align:center;color:#fff;font-size:12px;padding-right:2px;box-sizing:border-box">国际友谊</div>
<div style="left:66px;top:557px;width:68px;height:27px;background:#efefef;line-height:29px;text-align:center;color:#333333;letter-spacing:0.18px">25-12-14</div>
<div style="left:135px;top:557px;width:143px;height:27px;background:#efefef;line-height:29px;text-align:center;"><span style="color:#000">FUS拉巴特</span></div>
<div style="left:279px;top:557px;width:79px;height:27px;background:#efefef;line-height:29px;text-align:center;letter-spacing:0.18px"><span style="color:#ff0000">0-1</span><span style="color:#333333">(0-0)</span></div>
<div style="left:359px;top:557px;width:34px;height:27px;background:#efefef;line-height:29px;text-align:center;color:#333333;letter-spacing:0.18px">0-0</div>
<div style="left:394px;top:557px;width:77px;height:27px;background:#efefef;line-height:29px;text-align:center;"><span style="color:#008000">贝宁</span></div>
<div style="left:472px;top:557px;width:37px;height:27px;background:#fffaf6;line-height:29px;text-align:center;color:#333333;letter-spacing:0.18px"></div>
<div style="left:510px;top:557px;width:61px;height:27px;background:#fffaf6;line-height:29px;text-align:center;color:#333333;letter-spacing:0.18px"></div>
<div style="left:572px;top:557px;width:38px;height:27px;background:#fffaf6;line-height:29px;text-align:center;color:#333333;letter-spacing:0.18px"></div>
<div style="left:611px;top:557px;width:60px;height:27px;background:#f0f8fc;line-height:29px;text-align:center;color:#333333;letter-spacing:0.18px"></div>
<div style="left:672px;top:557px;width:48px;height:27px;background:#f0f8fc;line-height:29px;text-align:center;color:#333333;letter-spacing:0.18px"></div>
<div style="left:721px;top:557px;width:62px;height:27px;background:#f0f8fc;line-height:29px;text-align:center;color:#333333;letter-spacing:0.18px"></div>
<div style="left:784px;top:557px;width:34px;height:27px;background:#efefef;line-height:29px;text-align:center;color:#ff0000">勝</div>
<div style="left:819px;top:557px;width:35px;height:27px;background:#efefef;line-height:29px;text-align:center;color:#ff0000"></div>
<div style="left:855px;top:557px;width:52px;height:27px;background:#efefef;line-height:29px;text-align:center;color:#ff0000"></div>
<div style="left:0px;top:585px;width:65px;height:27px;background:#4a62ba;line-height:29px;text-align:center;color:#fff;font-size:12px;padding-right:2px;box-sizing:border-box">国际友谊</div>
<div style="left:66px;top:585px;width:68px;height:27px;background:#ffffff;line-height:29px;text-align:center;color:#333333;letter-spacing:0.18px">25-11-19</div>
<div style="left:135px;top:585px;width:143px;height:27px;background:#ffffff;line-height:29px;text-align:center;"><span style="color:#000">伯基纳法索(中)</span></div>
<div style="left:279px;top:585px;width:79px;height:27px;background:#ffffff;line-height:29px;text-align:center;letter-spacing:0.18px"><span style="color:#ff0000">3-0</span><span style="color:#333333">(2-0)</span></div>
<div style="left:359px;top:585px;width:34px;height:27px;background:#ffffff;line-height:29px;text-align:center;color:#333333;letter-spacing:0.18px">6-2</div>
<div style="left:394px;top:585px;width:77px;height:27px;background:#ffffff;line-height:29px;text-align:center;"><span style="color:#008000">贝宁</span></div>
<div style="left:472px;top:585px;width:37px;height:27px;background:#fffaf6;line-height:29px;text-align:center;color:#333333;letter-spacing:0.18px">1.02</div>
<div style="left:510px;top:585px;width:61px;height:27px;background:#fffaf6;line-height:29px;text-align:center;color:#333333;letter-spacing:0.18px">半球</div>
<div style="left:572px;top:585px;width:38px;height:27px;background:#fffaf6;line-height:29px;text-align:center;color:#333333;letter-spacing:0.18px">0.80</div>
<div style="left:611px;top:585px;width:60px;height:27px;background:#f0f8fc;line-height:29px;text-align:center;color:#333333;letter-spacing:0.18px">1.74</div>
<div style="left:672px;top:585px;width:48px;height:27px;background:#f0f8fc;line-height:29px;text-align:center;color:#333333;letter-spacing:0.18px">3.57</div>
<div style="left:721px;top:585px;width:62px;height:27px;background:#f0f8fc;line-height:29px;text-align:center;color:#333333;letter-spacing:0.18px">4.59</div>
<div style="left:784px;top:585px;width:34px;height:27px;background:#ffffff;line-height:29px;text-align:center;color:#008000">負</div>
<div style="left:819px;top:585px;width:35px;height:27px;background:#ffffff;line-height:29px;text-align:center;color:#008000">輸</div>
<div style="left:855px;top:585px;width:52px;height:27px;background:#ffffff;line-height:29px;text-align:center;color:#ff0000">大</div>
<div style="left:0px;top:613px;width:65px;height:27px;background:#2d4a0e;line-height:29px;text-align:center;color:#fff;font-size:12px;padding-right:2px;box-sizing:border-box">非洲预选</div>
<div style="left:66px;top:613px;width:68px;height:27px;background:#efefef;line-height:29px;text-align:center;color:#333333;letter-spacing:0.18px">25-10-15</div>
<div style="left:135px;top:613px;width:143px;height:27px;background:#efefef;line-height:29px;text-align:center;"><span style="color:#000">尼日利亚</span></div>
<div style="left:279px;top:613px;width:79px;height:27px;background:#efefef;line-height:29px;text-align:center;letter-spacing:0.18px"><span style="color:#ff0000">4-0</span><span style="color:#333333">(2-0)</span></div>
<div style="left:359px;top:613px;width:34px;height:27px;background:#efefef;line-height:29px;text-align:center;color:#333333;letter-spacing:0.18px">4-4</div>
<div style="left:394px;top:613px;width:77px;height:27px;background:#efefef;line-height:29px;text-align:center;"><span style="color:#008000">贝宁</span></div>
<div style="left:472px;top:613px;width:37px;height:27px;background:#fffaf6;line-height:29px;text-align:center;color:#333333;letter-spacing:0.18px">1.02</div>
<div style="left:510px;top:613px;width:61px;height:27px;background:#fffaf6;line-height:29px;text-align:center;color:#333333;letter-spacing:0.18px">一/球半</div>
<div style="left:572px;top:613px;width:38px;height:27px;background:#fffaf6;line-height:29px;text-align:center;color:#333333;letter-spacing:0.18px">0.80</div>
<div style="left:611px;top:613px;width:60px;height:27px;background:#f0f8fc;line-height:29px;text-align:center;color:#333333;letter-spacing:0.18px">1.39</div>
<div style="left:672px;top:613px;width:48px;height:27px;background:#f0f8fc;line-height:29px;text-align:center;color:#333333;letter-spacing:0.18px">4.39</div>
<div style="left:721px;top:613px;width:62px;height:27px;background:#f0f8fc;line-height:29px;text-align:center;color:#333333;letter-spacing:0.18px">7.50</div>
<div style="left:784px;top:613px;width:34px;height:27px;background:#efefef;line-height:29px;text-align:center;color:#008000">負</div>
<div style="left:819px;top:613px;width:35px;height:27px;background:#efefef;line-height:29px;text-align:center;color:#008000">輸</div>
<div style="left:855px;top:613px;width:52px;height:27px;background:#efefef;line-height:29px;text-align:center;color:#ff0000">大</div>
<div style="left:0px;top:641px;width:65px;height:27px;background:#2d4a0e;line-height:29px;text-align:center;color:#fff;font-size:12px;padding-right:2px;box-sizing:border-box">非洲预选</div>
<div style="left:66px;top:641px;width:68px;height:27px;background:#ffffff;line-height:29px;text-align:center;color:#333333;letter-spacing:0.18px">25-10-11</div>
<div style="left:135px;top:641px;width:143px;height:27px;background:#ffffff;line-height:29px;text-align:center;"><span style="color:#000">卢旺达</span></div>
<div style="left:279px;top:641px;width:79px;height:27px;background:#ffffff;line-height:29px;text-align:center;letter-spacing:0.18px"><span style="color:#ff0000">0-1</span><span style="color:#333333">(0-0)</span></div>
<div style="left:359px;top:641px;width:34px;height:27px;background:#ffffff;line-height:29px;text-align:center;color:#333333;letter-spacing:0.18px">2-4</div>
<div style="left:394px;top:641px;width:77px;height:27px;background:#ffffff;line-height:29px;text-align:center;"><span style="color:#008000">贝宁</span></div>
<div style="left:472px;top:641px;width:37px;height:27px;background:#fffaf6;line-height:29px;text-align:center;color:#333333;letter-spacing:0.18px">0.75</div>
<div style="left:510px;top:641px;width:61px;height:27px;background:#fffaf6;line-height:29px;text-align:center;color:#333333;letter-spacing:0.18px"><span style="color:#f00">*</span>平/半</div>
<div style="left:572px;top:641px;width:38px;height:27px;background:#fffaf6;line-height:29px;text-align:center;color:#333333;letter-spacing:0.18px">1.07</div>
<div style="left:611px;top:641px;width:60px;height:27px;background:#f0f8fc;line-height:29px;text-align:center;color:#333333;letter-spacing:0.18px">2.88</div>
<div style="left:672px;top:641px;width:48px;height:27px;background:#f0f8fc;line-height:29px;text-align:center;color:#333333;letter-spacing:0.18px">2.86</div>
<div style="left:721px;top:641px;width:62px;height:27px;background:#f0f8fc;line-height:29px;text-align:center;color:#333333;letter-spacing:0.18px">2.58</div>
<div style="left:784px;top:641px;width:34px;height:27px;background:#ffffff;line-height:29px;text-align:center;color:#ff0000">勝</div>
<div style="left:819px;top:641px;width:35px;height:27px;background:#ffffff;line-height:29px;text-align:center;color:#ff0000">贏</div>
<div style="left:855px;top:641px;width:52px;height:27px;background:#ffffff;line-height:29px;text-align:center;color:#008000">小</div>
<div style="left:0px;top:669px;width:65px;height:27px;background:#2d4a0e;line-height:29px;text-align:center;color:#fff;font-size:12px;padding-right:2px;box-sizing:border-box">非洲预选</div>
<div style="left:66px;top:669px;width:68px;height:27px;background:#efefef;line-height:29px;text-align:center;color:#333333;letter-spacing:0.18px">25-09-10</div>
<div style="left:135px;top:669px;width:143px;height:27px;background:#efefef;line-height:29px;text-align:center;"><span style="color:#008000">贝宁(中)</span></div>
<div style="left:279px;top:669px;width:79px;height:27px;background:#efefef;line-height:29px;text-align:center;letter-spacing:0.18px"><span style="color:#ff0000">4-0</span><span style="color:#333333">(3-0)</span></div>
<div style="left:359px;top:669px;width:34px;height:27px;background:#efefef;line-height:29px;text-align:center;color:#333333;letter-spacing:0.18px">0-2</div>
<div style="left:394px;top:669px;width:77px;height:27px;background:#efefef;line-height:29px;text-align:center;"><span style="color:#000">赖索托</span></div>
<div style="left:472px;top:669px;width:37px;height:27px;background:#fffaf6;line-height:29px;text-align:center;color:#333333;letter-spacing:0.18px">0.77</div>
<div style="left:510px;top:669px;width:61px;height:27px;background:#fffaf6;line-height:29px;text-align:center;color:#333333;letter-spacing:0.18px">一球</div>
<div style="left:572px;top:669px;width:38px;height:27px;background:#fffaf6;line-height:29px;text-align:center;color:#333333;letter-spacing:0.18px">1.05</div>
<div style="left:611px;top:669px;width:60px;height:27px;background:#f0f8fc;line-height:29px;text-align:center;color:#333333;letter-spacing:0.18px">1.47</div>
<div style="left:672px;top:669px;width:48px;height:27px;background:#f0f8fc;line-height:29px;text-align:center;color:#333333;letter-spacing:0.18px">3.68</div>
<div style="left:721px;top:669px;width:62px;height:27px;background:#f0f8fc;line-height:29px;text-align:center;color:#333333;letter-spacing:0.18px">7.86</div>
<div style="left:784px;top:669px;width:34px;height:27px;background:#efefef;line-height:29px;text-align:center;color:#ff0000">勝</div>
<div style="left:819px;top:669px;width:35px;height:27px;background:#efefef;line-height:29px;text-align:center;color:#ff0000">贏</div>
<div style="left:855px;top:669px;width:52px;height:27px;background:#efefef;line-height:29px;text-align:center;color:#ff0000">大</div>
<div style="left:0px;top:697px;width:65px;height:27px;background:#2d4a0e;line-height:29px;text-align:center;color:#fff;font-size:12px;padding-right:2px;box-sizing:border-box">非洲预选</div>
<div style="left:66px;top:697px;width:68px;height:27px;background:#ffffff;line-height:29px;text-align:center;color:#333333;letter-spacing:0.18px">25-09-06</div>
<div style="left:135px;top:697px;width:143px;height:27px;background:#ffffff;line-height:29px;text-align:center;"><span style="color:#008000">贝宁(中)</span></div>
<div style="left:279px;top:697px;width:79px;height:27px;background:#ffffff;line-height:29px;text-align:center;letter-spacing:0.18px"><span style="color:#ff0000">1-0</span><span style="color:#333333">(0-0)</span></div>
<div style="left:359px;top:697px;width:34px;height:27px;background:#ffffff;line-height:29px;text-align:center;color:#333333;letter-spacing:0.18px">2-5</div>
<div style="left:394px;top:697px;width:77px;height:27px;background:#ffffff;line-height:29px;text-align:center;"><span style="color:#000">津巴布韦</span></div>
<div style="left:472px;top:697px;width:37px;height:27px;background:#fffaf6;line-height:29px;text-align:center;color:#333333;letter-spacing:0.18px">1.02</div>
<div style="left:510px;top:697px;width:61px;height:27px;background:#fffaf6;line-height:29px;text-align:center;color:#333333;letter-spacing:0.18px">平/半</div>
<div style="left:572px;top:697px;width:38px;height:27px;background:#fffaf6;line-height:29px;text-align:center;color:#333333;letter-spacing:0.18px">0.80</div>
<div style="left:611px;top:697px;width:60px;height:27px;background:#f0f8fc;line-height:29px;text-align:center;color:#333333;letter-spacing:0.18px">2.23</div>
<div style="left:672px;top:697px;width:48px;height:27px;background:#f0f8fc;line-height:29px;text-align:center;color:#333333;letter-spacing:0.18px">2.96</div>
<div style="left:721px;top:697px;width:62px;height:27px;background:#f0f8fc;line-height:29px;text-align:center;color:#333333;letter-spacing:0.18px">3.39</div>
<div style="left:784px;top:697px;width:34px;height:27px;background:#ffffff;line-height:29px;text-align:center;color:#ff0000">勝</div>
<div style="left:819px;top:697px;width:35px;height:27px;background:#ffffff;line-height:29px;text-align:center;color:#ff0000">贏</div>
<div style="left:855px;top:697px;width:52px;height:27px;background:#ffffff;line-height:29px;text-align:center;color:#008000">小</div>
<div style="left:0px;top:725px;width:65px;height:27px;background:#4a62ba;line-height:29px;text-align:center;color:#fff;font-size:12px;padding-right:2px;box-sizing:border-box">国际友谊</div>
<div style="left:66px;top:725px;width:68px;height:27px;background:#efefef;line-height:29px;text-align:center;color:#333333;letter-spacing:0.18px">25-06-10</div>
<div style="left:135px;top:725px;width:143px;height:27px;background:#efefef;line-height:29px;text-align:center;"><span style="color:#000">摩洛哥</span></div>
<div style="left:279px;top:725px;width:79px;height:27px;background:#efefef;line-height:29px;text-align:center;letter-spacing:0.18px"><span style="color:#ff0000">1-0</span><span style="color:#333333">(1-0)</span></div>
<div style="left:359px;top:725px;width:34px;height:27px;background:#efefef;line-height:29px;text-align:center;color:#333333;letter-spacing:0.18px">6-0</div>
<div style="left:394px;top:725px;width:77px;height:27px;background:#efefef;line-height:29px;text-align:center;"><span style="color:#008000">贝宁</span></div>
<div style="left:472px;top:725px;width:37px;height:27px;background:#fffaf6;line-height:29px;text-align:center;color:#333333;letter-spacing:0.18px">0.83</div>
<div style="left:510px;top:725px;width:61px;height:27px;background:#fffaf6;line-height:29px;text-align:center;color:#333333;letter-spacing:0.18px">球半/两</div>
<div style="left:572px;top:725px;width:38px;height:27px;background:#fffaf6;line-height:29px;text-align:center;color:#333333;letter-spacing:0.18px">0.99</div>
<div style="left:611px;top:725px;width:60px;height:27px;background:#f0f8fc;line-height:29px;text-align:center;color:#333333;letter-spacing:0.18px">1.16</div>
<div style="left:672px;top:725px;width:48px;height:27px;background:#f0f8fc;line-height:29px;text-align:center;color:#333333;letter-spacing:0.18px">6.46</div>
<div style="left:721px;top:725px;width:62px;height:27px;background:#f0f8fc;line-height:29px;text-align:center;color:#333333;letter-spacing:0.18px">16.84</div>
<div style="left:784px;top:725px;width:34px;height:27px;background:#efefef;line-height:29px;text-align:center;color:#008000">負</div>
<div style="left:819px;top:725px;width:35px;height:27px;background:#efefef;line-height:29px;text-align:center;color:#ff0000">贏</div>
<div style="left:855px;top:725px;width:52px;height:27px;background:#efefef;line-height:29px;text-align:center;color:#008000">小</div>
<div style="left:272.1px;top:40px;width:14px;height:14px;font-size:12px;line-height:14px">近</div>
<div style="left:289px;top:38px;width:36px;height:16px;background:#fff;border:1px solid #b9b9b9;box-sizing:border-box;border-radius:2px;"><span style="position:absolute;left:4px;top:1px;line-height:14px;font-family:"Liberation Serif",serif;font-size:12.5px;color:#000">10</span><span class="tri" style="right:5px;top:4px"></span></div>
<div style="left:328.5px;top:40px;width:14px;height:14px;font-size:12px;line-height:14px">场</div>
<div style="left:345.2px;top:41px;width:11.5px;height:12px;border-radius:3px;background:linear-gradient(#ececec,#dcdcdc);box-shadow:inset 0 0 0 1px #b4b4b4;"></div>
<div style="left:362.2px;top:40px;width:26px;height:14px;font-size:12px;line-height:14px">同主</div>
<div style="left:386.3px;top:41px;width:11.5px;height:12px;border-radius:3px;background:linear-gradient(#ececec,#dcdcdc);box-shadow:inset 0 0 0 1px #b4b4b4;"><svg width="12" height="12" viewBox="0 0 12 12" style="position:absolute;left:0;top:0"><path d="M2.2 6.2 L4.6 8.8 L9.6 2.6" stroke="#333" stroke-width="2.1" fill="none"/></svg></div>
<div style="left:398.1px;top:40px;width:38px;height:14px;font-size:12px;line-height:14px">非洲杯</div>
<div style="left:435.4px;top:41px;width:11.5px;height:12px;border-radius:3px;background:linear-gradient(#ececec,#dcdcdc);box-shadow:inset 0 0 0 1px #b4b4b4;"><svg width="12" height="12" viewBox="0 0 12 12" style="position:absolute;left:0;top:0"><path d="M2.2 6.2 L4.6 8.8 L9.6 2.6" stroke="#333" stroke-width="2.1" fill="none"/></svg></div>
<div style="left:447.3px;top:40px;width:50px;height:14px;font-size:12px;line-height:14px">国际友谊</div>
<div style="left:496.6px;top:41px;width:11.5px;height:12px;border-radius:3px;background:linear-gradient(#ececec,#dcdcdc);box-shadow:inset 0 0 0 1px #b4b4b4;"><svg width="12" height="12" viewBox="0 0 12 12" style="position:absolute;left:0;top:0"><path d="M2.2 6.2 L4.6 8.8 L9.6 2.6" stroke="#333" stroke-width="2.1" fill="none"/></svg></div>
<div style="left:508.5px;top:40px;width:50px;height:14px;font-size:12px;line-height:14px">阿拉伯杯</div>
<div style="left:557.8px;top:41px;width:11.5px;height:12px;border-radius:3px;background:linear-gradient(#ececec,#dcdcdc);box-shadow:inset 0 0 0 1px #b4b4b4;"><svg width="12" height="12" viewBox="0 0 12 12" style="position:absolute;left:0;top:0"><path d="M2.2 6.2 L4.6 8.8 L9.6 2.6" stroke="#333" stroke-width="2.1" fill="none"/></svg></div>
<div style="left:568.9px;top:40px;width:50px;height:14px;font-size:12px;line-height:14px">非洲预选</div>
<div style="left:619px;top:41px;width:11.5px;height:12px;border-radius:3px;background:linear-gradient(#ececec,#dcdcdc);box-shadow:inset 0 0 0 1px #b4b4b4;"><svg width="12" height="12" viewBox="0 0 12 12" style="position:absolute;left:0;top:0"><path d="M2.2 6.2 L4.6 8.8 L9.6 2.6" stroke="#333" stroke-width="2.1" fill="none"/></svg></div>
<div style="left:629.5px;top:40px;width:50px;height:14px;font-size:12px;line-height:14px">非国锦标</div>
<div style="left:245.5px;top:415px;width:14px;height:14px;font-size:12px;line-height:14px">近</div>
<div style="left:262.4px;top:413px;width:36px;height:16px;background:#fff;border:1px solid #b9b9b9;box-sizing:border-box;border-radius:2px;"><span style="position:absolute;left:4px;top:1px;line-height:14px;font-family:"Liberation Serif",serif;font-size:12.5px;color:#000">10</span><span class="tri" style="right:5px;top:4px"></span></div>
<div style="left:301.7px;top:415px;width:14px;height:14px;font-size:12px;line-height:14px">场</div>
<div style="left:318.4px;top:416px;width:11.5px;height:12px;border-radius:3px;background:linear-gradient(#ececec,#dcdcdc);box-shadow:inset 0 0 0 1px #b4b4b4;"></div>
<div style="left:334.6px;top:415px;width:26px;height:14px;font-size:12px;line-height:14px">同客</div>
<div style="left:363.5px;top:416px;width:11.5px;height:12px;border-radius:3px;background:linear-gradient(#ececec,#dcdcdc);box-shadow:inset 0 0 0 1px #b4b4b4;"><svg width="12" height="12" viewBox="0 0 12 12" style="position:absolute;left:0;top:0"><path d="M2.2 6.2 L4.6 8.8 L9.6 2.6" stroke="#333" stroke-width="2.1" fill="none"/></svg></div>
<div style="left:374.9px;top:415px;width:38px;height:14px;font-size:12px;line-height:14px">非洲杯</div>
<div style="left:412.4px;top:416px;width:11.5px;height:12px;border-radius:3px;background:linear-gradient(#ececec,#dcdcdc);box-shadow:inset 0 0 0 1px #b4b4b4;"><svg width="12" height="12" viewBox="0 0 12 12" style="position:absolute;left:0;top:0"><path d="M2.2 6.2 L4.6 8.8 L9.6 2.6" stroke="#333" stroke-width="2.1" fill="none"/></svg></div>
<div style="left:423.5px;top:415px;width:50px;height:14px;font-size:12px;line-height:14px">国际友谊</div>
<div style="left:474px;top:416px;width:11.5px;height:12px;border-radius:3px;background:linear-gradient(#ececec,#dcdcdc);box-shadow:inset 0 0 0 1px #b4b4b4;"><svg width="12" height="12" viewBox="0 0 12 12" style="position:absolute;left:0;top:0"><path d="M2.2 6.2 L4.6 8.8 L9.6 2.6" stroke="#333" stroke-width="2.1" fill="none"/></svg></div>
<div style="left:485.5px;top:415px;width:50px;height:14px;font-size:12px;line-height:14px">非洲预选</div>
<div style="left:536px;top:416px;width:11.5px;height:12px;border-radius:3px;background:linear-gradient(#ececec,#dcdcdc);box-shadow:inset 0 0 0 1px #b4b4b4;"><svg width="12" height="12" viewBox="0 0 12 12" style="position:absolute;left:0;top:0"><path d="M2.2 6.2 L4.6 8.8 L9.6 2.6" stroke="#333" stroke-width="2.1" fill="none"/></svg></div>
<div style="left:546.0px;top:415px;width:50px;height:14px;font-size:12px;line-height:14px">非国锦标</div>
<div style="left:596px;top:416px;width:11.5px;height:12px;border-radius:3px;background:linear-gradient(#ececec,#dcdcdc);box-shadow:inset 0 0 0 1px #b4b4b4;"><svg width="12" height="12" viewBox="0 0 12 12" style="position:absolute;left:0;top:0"><path d="M2.2 6.2 L4.6 8.8 L9.6 2.6" stroke="#333" stroke-width="2.1" fill="none"/></svg></div>
<div style="left:606.0px;top:415px;width:50px;height:14px;font-size:12px;line-height:14px">球会友谊</div>
<div style="left:656.7px;top:416px;width:11.5px;height:12px;border-radius:3px;background:linear-gradient(#ececec,#dcdcdc);box-shadow:inset 0 0 0 1px #b4b4b4;"><svg width="12" height="12" viewBox="0 0 12 12" style="position:absolute;left:0;top:0"><path d="M2.2 6.2 L4.6 8.8 L9.6 2.6" stroke="#333" stroke-width="2.1" fill="none"/></svg></div>
<div style="left:668.3px;top:415px;width:38px;height:14px;font-size:12px;line-height:14px">西非杯</div>
<div style="left:478px;top:58px;width:59px;height:20px;background:#fff;border:1px solid #b9b9b9;box-sizing:border-box;border-radius:2px;"><span style="position:absolute;left:4px;top:1px;line-height:18px;font-size:13px;color:#000">Crow*</span><span class="tri" style="right:5px;top:6px"></span></div>
<div style="left:545px;top:58px;width:35px;height:20px;background:#fff;border:1px solid #b9b9b9;box-sizing:border-box;border-radius:2px;"><span style="position:absolute;left:4px;top:1px;line-height:18px;font-size:12px;color:#000">终</span><span class="tri" style="right:5px;top:6px"></span></div>
<div style="left:626px;top:58px;width:83px;height:20px;background:#fff;border:1px solid #b9b9b9;box-sizing:border-box;border-radius:2px;"><span style="position:absolute;left:4px;top:1px;line-height:18px;font-size:12px;color:#000">胜平负均值</span><span class="tri" style="right:5px;top:6px"></span></div>
<div style="left:718px;top:58px;width:35px;height:20px;background:#fff;border:1px solid #b9b9b9;box-sizing:border-box;border-radius:2px;"><span style="position:absolute;left:4px;top:1px;line-height:18px;font-size:12px;color:#000">终</span><span class="tri" style="right:5px;top:6px"></span></div>
<div style="left:820px;top:58px;width:47px;height:20px;background:#fff;border:1px solid #b9b9b9;box-sizing:border-box;border-radius:2px;"><span style="position:absolute;left:4px;top:1px;line-height:18px;font-size:12px;color:#000">全场</span><span class="tri" style="right:5px;top:6px"></span></div>
<div style="left:489px;top:433px;width:59px;height:20px;background:#fff;border:1px solid #b9b9b9;box-sizing:border-box;border-radius:2px;"><span style="position:absolute;left:4px;top:1px;line-height:18px;font-size:13px;color:#000">Crow*</span><span class="tri" style="right:5px;top:6px"></span></div>
<div style="left:556px;top:433px;width:35px;height:20px;background:#fff;border:1px solid #b9b9b9;box-sizing:border-box;border-radius:2px;"><span style="position:absolute;left:4px;top:1px;line-height:18px;font-size:12px;color:#000">终</span><span class="tri" style="right:5px;top:6px"></span></div>
<div style="left:634px;top:433px;width:83px;height:20px;background:#fff;border:1px solid #b9b9b9;box-sizing:border-box;border-radius:2px;"><span style="position:absolute;left:4px;top:1px;line-height:18px;font-size:12px;color:#000">胜平负均值</span><span class="tri" style="right:5px;top:6px"></span></div>
<div style="left:725px;top:433px;width:35px;height:20px;background:#fff;border:1px solid #b9b9b9;box-sizing:border-box;border-radius:2px;"><span style="position:absolute;left:4px;top:1px;line-height:18px;font-size:12px;color:#000">终</span><span class="tri" style="right:5px;top:6px"></span></div>
<div style="left:822px;top:433px;width:47px;height:20px;background:#fff;border:1px solid #b9b9b9;box-sizing:border-box;border-radius:2px;"><span style="position:absolute;left:4px;top:1px;line-height:18px;font-size:12px;color:#000">全场</span><span class="tri" style="right:5px;top:6px"></span></div>
<div style="left:0px;top:377px;width:908px;height:29px;background:#c2c2c2"></div>
<div style="left:0px;top:378px;width:907px;height:27px;background:#fff;text-align:center;font-size:12px;line-height:27px;color:#1a1a1a;letter-spacing:0.3px">近<span style="color:#f00">10</span>场,胜4平4负2, 胜率:<span style="color:#00f">40%</span> 赢率:<span style="display:inline-block;vertical-align:top;margin-top:4px;width:36px;text-align:center;background:#008000;color:#fff;font-size:13px;line-height:18px;letter-spacing:0.5px">20%</span> 大:<span style="color:#00f">40%</span> 单率:<span style="color:#00f">50%</span></div>
</body></html>
